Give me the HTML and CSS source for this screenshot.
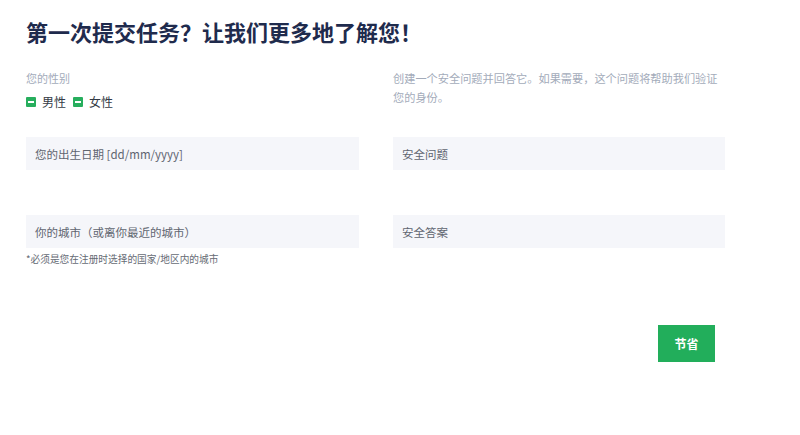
FILE: index.html
```html
<!DOCTYPE html>
<html lang="zh">
<head>
<meta charset="utf-8">
<link rel="stylesheet" href="styles.css">
</head>
<body>
<div class="page">
  <h1 class="title">第一次提交任务？让我们更多地了解您！</h1>
  <div class="grid">
    <div class="col">
      <div class="label">您的性别</div>
      <div class="genders">
        <span class="opt"><span class="box"></span>男性</span>
        <span class="opt"><span class="box"></span>女性</span>
      </div>
    </div>
    <div class="col">
      <div class="label desc">创建一个安全问题并回答它。如果需要，这个问题将帮助我们验证您的身份。</div>
    </div>
    <div class="col field-row">
      <div class="input">您的出生日期 [dd/mm/yyyy]</div>
    </div>
    <div class="col field-row">
      <div class="input">安全问题</div>
    </div>
    <div class="col field-row2">
      <div class="input">你的城市（或离你最近的城市）</div>
      <div class="note">*必须是您在注册时选择的国家/地区内的城市</div>
    </div>
    <div class="col field-row2">
      <div class="input">安全答案</div>
    </div>
  </div>
  <div class="actions">
    <button class="save">节省</button>
  </div>
</div>
</body>
</html>
```
FILE: styles.css
```css
html, body {
  margin: 0;
  padding: 0;
  background: #ffffff;
  font-family: "Noto Sans CJK SC", "Noto Sans", sans-serif;
}
.page {
  padding: 14px 0 0 26px;
  width: 699px;
}
.title {
  margin: 0;
  font-size: 22px;
  line-height: 34px;
  font-weight: 700;
  color: #1f2b4d;
}
.grid {
  display: grid;
  grid-template-columns: 333px 332px;
  column-gap: 34px;
  margin-top: 21px;
}
.label {
  font-size: 11px;
  line-height: 19px;
  color: #a3abba;
}
.desc {
  font-size: 11.2px;
}
.genders {
  display: flex;
  gap: 7px;
  margin-top: 6px;
  font-size: 12px;
  line-height: 16px;
  color: #333a45;
}
.opt {
  display: flex;
  align-items: center;
  gap: 6px;
}
.box {
  width: 10px;
  height: 10px;
  border-radius: 1px;
  background: #27ae5d;
  position: relative;
}
.box::after {
  content: "";
  position: absolute;
  left: 2px;
  right: 2px;
  top: 4px;
  height: 2px;
  background: #ffffff;
}
.field-row {
  margin-top: 27px;
}
.field-row2 {
  margin-top: 45px;
}
.input {
  height: 33px;
  background: #f5f6fa;
  box-sizing: border-box;
  padding-left: 9px;
  display: flex;
  align-items: center;
  font-size: 11.5px;
  color: #5f6570;
}
.note {
  margin-top: 4px;
  font-size: 9.7px;
  line-height: 14px;
  color: #666b75;
}
.actions {
  display: flex;
  justify-content: flex-end;
  margin-top: 59px;
  padding-right: 10px;
}
.save {
  width: 57px;
  height: 37px;
  border: none;
  background: #22ae5b;
  color: #ffffff;
  font-family: "Noto Sans CJK SC", sans-serif;
  font-size: 12px;
  font-weight: 700;
  padding: 0;
}
```
